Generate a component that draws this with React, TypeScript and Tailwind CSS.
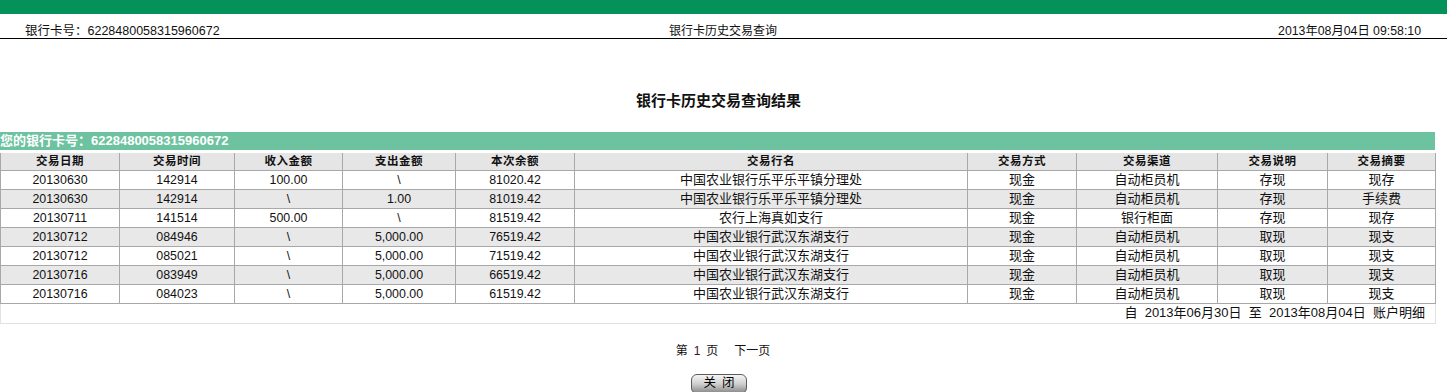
const cols = [
  { label: '交易日期', w: 'w-[119px]' },
  { label: '交易时间', w: 'w-[115px]' },
  { label: '收入金额', w: 'w-[108px]' },
  { label: '支出金额', w: 'w-[113px]' },
  { label: '本次余额', w: 'w-[119px]' },
  { label: '交易行名', w: 'w-[393px]' },
  { label: '交易方式', w: 'w-[109px]' },
  { label: '交易渠道', w: 'w-[141px]' },
  { label: '交易说明', w: 'w-[110px]' },
  { label: '交易摘要', w: 'w-[108px]' },
]

const rows = [
  ['20130630', '142914', '100.00', '\\', '81020.42', '中国农业银行乐平乐平镇分理处', '现金', '自动柜员机', '存现', '现存'],
  ['20130630', '142914', '\\', '1.00', '81019.42', '中国农业银行乐平乐平镇分理处', '现金', '自动柜员机', '存现', '手续费'],
  ['20130711', '141514', '500.00', '\\', '81519.42', '农行上海真如支行', '现金', '银行柜面', '存现', '现存'],
  ['20130712', '084946', '\\', '5,000.00', '76519.42', '中国农业银行武汉东湖支行', '现金', '自动柜员机', '取现', '现支'],
  ['20130712', '085021', '\\', '5,000.00', '71519.42', '中国农业银行武汉东湖支行', '现金', '自动柜员机', '取现', '现支'],
  ['20130716', '083949', '\\', '5,000.00', '66519.42', '中国农业银行武汉东湖支行', '现金', '自动柜员机', '取现', '现支'],
  ['20130716', '084023', '\\', '5,000.00', '61519.42', '中国农业银行武汉东湖支行', '现金', '自动柜员机', '取现', '现支'],
]

// number cells come out narrower than the CJK ones in the original
const isAscii = (s: string) => /^[\x00-\x7f]+$/.test(s)

export default function App() {
  return (
    <div className="h-[392px] overflow-hidden bg-white text-[12px] text-[#111] font-['Liberation_Sans','Noto_Sans_CJK_SC',sans-serif]">
      <div className="h-[14px] bg-[#05925a]" />
      <div className="flex h-[25px] items-center justify-between border-b border-black pl-[25px] pr-[26px] pt-[10px]">
        <span className="w-[300px] text-[12.5px]">银行卡号：6228480058315960672</span>
        <span>银行卡历史交易查询</span>
        <span className="w-[300px] text-right text-[12.3px]">2013年08月04日 09:58:10</span>
      </div>

      <h1 className="mt-[52px] h-[20px] pr-[10px] text-center text-[15px] font-bold leading-[20px]">
        银行卡历史交易查询结果
      </h1>

      <div className="mt-[21px] w-[1435px]">
        <div className="h-[18px] bg-[#6dc2a0] text-[13px] font-bold leading-[18px] text-white">
          您的银行卡号：6228480058315960672
        </div>
        <table className="mt-[3px] w-full table-fixed border-collapse text-[13px]">
          <thead>
            <tr className="h-[17px] bg-[#e5e5e5]">
              {cols.map(c => (
                <th
                  key={c.label}
                  className={`${c.w} border-x border-b border-[#a8a8a8] p-0 text-[11.5px] font-bold leading-[16px] tracking-[0.5px]`}
                >
                  {c.label}
                </th>
              ))}
            </tr>
          </thead>
          <tbody>
            {rows.map((r, i) => (
              <tr key={i} className={i % 2 === 1 ? 'h-[19px] bg-[#e8e8e8]' : 'h-[19px] bg-white'}>
                {r.map((v, j) => (
                  <td
                    key={j}
                    className={
                      isAscii(v)
                        ? 'border border-[#a8a8a8] p-0 text-center text-[12.4px] leading-[18px]'
                        : 'border border-[#a8a8a8] p-0 text-center leading-[18px]'
                    }
                  >
                    {v}
                  </td>
                ))}
              </tr>
            ))}
            <tr className="h-[20px]">
              <td colSpan={10} className="border border-[#e2e2e2] border-t-[#a8a8a8] p-0 pr-[10px] text-right leading-[18px]">
                自&nbsp; 2013年06月30日&nbsp; 至&nbsp; 2013年08月04日&nbsp; 账户明细
              </td>
            </tr>
          </tbody>
        </table>
      </div>

      <div className="mt-[17px] flex h-[20px] items-center justify-center gap-[16px] pr-[1px] text-[12px]">
        <span>
          第<span className="mx-[6px] text-[#3a1020]">1</span>页
        </span>
        <span>下一页</span>
      </div>

      <div className="mt-[13px] flex justify-center pr-[9px]">
        <button className="h-[20px] w-[56px] rounded-[6px] border border-[#5c5c5c] bg-gradient-to-b from-[#f6f6f6] via-[#cfcfcf] to-[#888888] pl-[6px] text-[12.5px] leading-[17px] tracking-[6px] text-black">
          关闭
        </button>
      </div>
    </div>
  )
}
